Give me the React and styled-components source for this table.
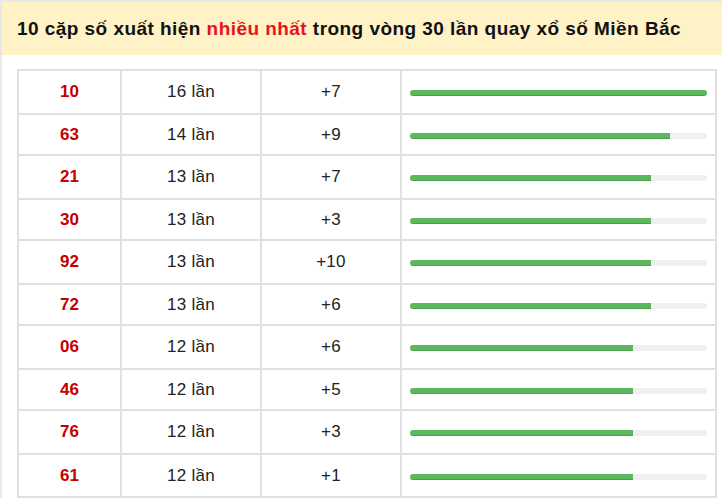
import styled, { createGlobalStyle } from "styled-components";

const GlobalStyle = createGlobalStyle`
  html, body {
    margin: 0;
    padding: 0;
    background: #fff;
    font-family: "Liberation Sans", Arial, sans-serif;
  }
`;

const rows = [
  { pair: "10", times: 16, gap: "+7" },
  { pair: "63", times: 14, gap: "+9" },
  { pair: "21", times: 13, gap: "+7" },
  { pair: "30", times: 13, gap: "+3" },
  { pair: "92", times: 13, gap: "+10" },
  { pair: "72", times: 13, gap: "+6" },
  { pair: "06", times: 12, gap: "+6" },
  { pair: "46", times: 12, gap: "+5" },
  { pair: "76", times: 12, gap: "+3" },
  { pair: "61", times: 12, gap: "+1" },
];

const App = () => {
  const max = Math.max(...rows.map((r) => r.times));
  return (
    <>
      <GlobalStyle />
      <Box>
        <Title>
          10 cặp số xuất hiện <Hot>nhiều nhất</Hot> trong vòng 30 lần quay xổ số Miền Bắc
        </Title>
        <Body>
          <Table>
            <tbody>
              {rows.map((r, i) => (
                <Row key={r.pair} tall={i % 2 === 0}>
                  <Pair>{r.pair}</Pair>
                  <Cell>{r.times} lần</Cell>
                  <Cell>{r.gap}</Cell>
                  <BarCell>
                    <Track>
                      <Fill style={{ width: `${(r.times / max) * 100}%` }} />
                    </Track>
                  </BarCell>
                </Row>
              ))}
            </tbody>
          </Table>
        </Body>
      </Box>
    </>
  );
};

export default App;

const Box = styled.div`
  width: 740px;
  border-left: 2px solid #e8e8e8;
  border-top: 2px solid #e8e8e8;
  box-sizing: border-box;
`;

const Title = styled.h2`
  margin: 0;
  background: #fff2c6;
  height: 53px;
  display: flex;
  align-items: center;
  padding: 0 0 0 15px;
  font-size: 19px;
  letter-spacing: 0.45px;
  font-weight: bold;
  color: #111;
  white-space: pre;
`;

const Hot = styled.span`
  color: #e8121b;
`;

const Body = styled.div`
  padding: 14px 0 0 15px;
`;

const Table = styled.table`
  width: 700px;
  border-collapse: collapse;
  table-layout: fixed;
  border: 2px solid #e0e0e0;
  td {
    border: 2px solid #e0e0e0;
    padding: 0;
  }
  td:nth-child(1) { width: 101px; }
  td:nth-child(2) { width: 138px; }
  td:nth-child(3) { width: 138px; }
`;

const Row = styled.tr`
  height: ${(p) => (p.tall ? "44px" : "41px")};
  &:last-child {
    height: 43px;
  }
`;

const Cell = styled.td`
  text-align: center;
  font-size: 17px;
  letter-spacing: 0.3px;
  color: #222;
`;

const Pair = styled(Cell)`
  font-weight: bold;
  letter-spacing: 0;
  color: #c40000;
`;

const BarCell = styled.td`
  padding: 0 8px !important;
`;

const Track = styled.div`
  height: 6px;
  background: #efefef;
  border-radius: 3px;
  overflow: hidden;
  margin-top: 2px;
`;

const Fill = styled.div`
  height: 100%;
  background: #5cb85c;
  box-shadow: inset 0 -1px 0 rgba(0, 0, 0, 0.15);
`;
